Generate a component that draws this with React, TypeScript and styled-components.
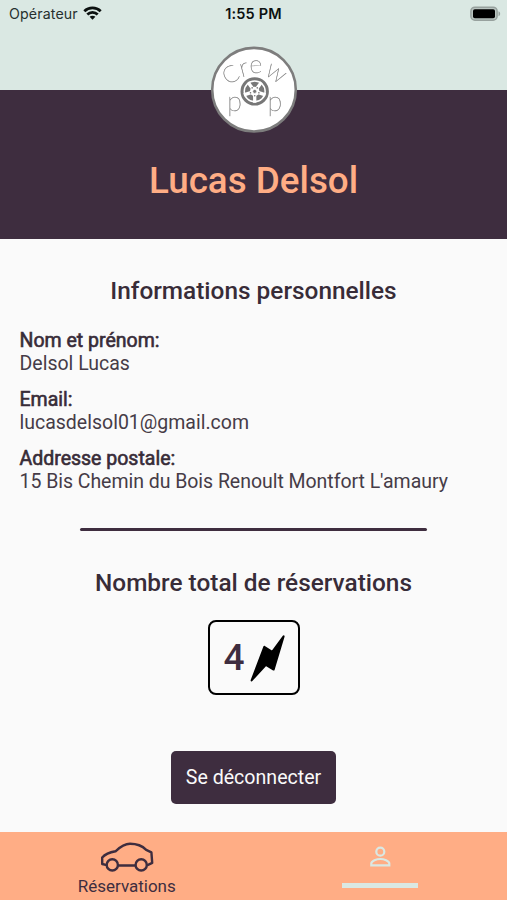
import React from "react";
import styled, { createGlobalStyle } from "styled-components";

const plum = "#3e2d3f";
const peach = "#ffad85";
const mint = "#dae8e3";

const GlobalStyle = createGlobalStyle`
  *, *::before, *::after { box-sizing: border-box; }
  body { margin: 0; background: #fafafa; }
  h1, h2, dl, dt, dd { margin: 0; font-weight: inherit; }
`;

const Screen = styled.div`
  width: 507px;
  height: 900px;
  display: flex;
  flex-direction: column;
  overflow: hidden;
  background: #fafafa;
  color: ${plum};
  font-family: Roboto, "Liberation Sans", sans-serif;
`;

const TopArea = styled.header`
  height: 90px;
  flex: none;
  background: ${mint};
`;

const StatusBar = styled.div`
  height: 27px;
  display: grid;
  grid-template-columns: 1fr auto 1fr;
  align-items: center;
  padding: 0 6px;
  font-family: Inter, "Liberation Sans", sans-serif;
  color: #0c1110;
`;

const Carrier = styled.div`
  display: flex;
  align-items: center;
  gap: 5px;
  padding-left: 3px;
  font-size: 14.2px;
  letter-spacing: 0.13px;
  color: #26302e;
`;

const Clock = styled.div`
  font-size: 14.5px;
  font-weight: 600;
  letter-spacing: 0.15px;
`;

const Battery = styled.svg`
  justify-self: end;
  display: block;
`;

const Banner = styled.section`
  position: relative;
  height: 149px;
  flex: none;
  display: flex;
  justify-content: center;
  background: ${plum};
`;

const LogoBadge = styled.svg`
  position: absolute;
  top: -44px;
  left: 210px;
  will-change: transform;
`;

const LogoLetter = styled.text`
  font-family: Lato, sans-serif;
  font-weight: 100;
  fill: #8c8c8c;
  stroke: #8c8c8c;
  stroke-width: 0.4px;
  text-anchor: middle;
`;

const UserName = styled.h1`
  padding-top: 69px;
  font-size: 36.8px;
  line-height: 44px;
  font-weight: 500;
  color: ${peach};
`;

const Content = styled.main`
  flex: 1;
  display: flex;
  flex-direction: column;
  align-items: center;
`;

const SectionTitle = styled.h2<{ $top: number }>`
  margin-top: ${(p) => p.$top}px;
  font-size: 24.4px;
  line-height: 30px;
  font-weight: 500;
  color: #382c38;
`;

const Details = styled.dl`
  align-self: stretch;
  margin-top: 23px;
  padding-left: 19.5px;
  display: flex;
  flex-direction: column;
  gap: 13px;
  font-size: 19.5px;
  line-height: 23px;
`;

const Label = styled.dt`
  color: #382c38;
  -webkit-text-stroke: 0.6px #382c38;
`;

const Value = styled.dd<{ $tight?: boolean }>`
  color: #463c47;
  letter-spacing: ${(p) => (p.$tight ? "-0.04px" : "0")};
`;

const Divider = styled.div`
  width: 347px;
  height: 3px;
  margin-top: 35px;
  border-radius: 2px;
  background: ${plum};
`;

const Counter = styled.div`
  width: 92px;
  height: 75px;
  margin-top: 22px;
  display: flex;
  align-items: center;
  padding-left: 14px;
  gap: 5px;
  border: 2.7px solid #000;
  border-radius: 8px;
  font-size: 37px;
  line-height: 44px;
  font-weight: 500;
`;

const LogoutButton = styled.button`
  width: 165px;
  height: 53px;
  margin-top: 56px;
  padding: 1px 0 0;
  border: 0;
  border-radius: 5px;
  background: ${plum};
  color: #fafafa;
  font: 400 19.6px/24px Roboto, sans-serif;
`;

const TabBar = styled.nav`
  height: 68px;
  flex: none;
  display: grid;
  grid-template-columns: 1fr 1fr;
  background: ${peach};
`;

const Tab = styled.div`
  display: flex;
  flex-direction: column;
  align-items: center;
  font-size: 17px;
  line-height: 20px;
`;

const CarSlot = styled.div`
  height: 44px;
  padding-top: 10px;
`;

const PersonSlot = styled.div`
  height: 37px;
  padding-top: 14px;
`;

const ActiveMark = styled.div`
  width: 76px;
  height: 5px;
  background: ${mint};
  margin-top: 14px;
`;

const WifiIcon = () => (
  <svg width="19" height="15" viewBox="0 0 19 15" fill="none" stroke="#0c1110" strokeWidth="2.7">
    <path d="M1.3 5.2C5.8 .7 13.2 .7 17.7 5.2" />
    <path d="M4.3 8.5C7.2 5.6 11.8 5.6 14.7 8.5" />
    <path d="M9.5 13.7 6.6 10.8c1.6-1.5 4.2-1.5 5.8 0Z" fill="#0c1110" stroke="none" />
  </svg>
);

const BatteryIcon = () => (
  <Battery width="31" height="16" viewBox="0 0 31 16">
    <rect x="0.9" y="1.2" width="26.2" height="13" rx="4" fill="#b9c4c0" stroke="#97a19e" strokeWidth="1.5" />
    <rect x="3" y="3.2" width="22" height="9" rx="1.8" fill="#000" />
    <path d="M28.5 5.2c2.2.7 2.2 4.3 0 5Z" fill="#97a19e" />
  </Battery>
);

const spokeAngles = [36, 108, 180, 252, 324];

const Logo = () => (
  <LogoBadge width="88" height="88" viewBox="0 0 88 88" role="img" aria-label="Crew Pop">
    <circle cx="44" cy="43.7" r="41.8" fill="#fff" stroke="#7d7d7d" strokeWidth="2.6" />
    <LogoLetter fontSize="23" transform="translate(24.3 35.5) rotate(-29)">C</LogoLetter>
    <LogoLetter fontSize="26" transform="translate(35.8 30) rotate(-15)">r</LogoLetter>
    <LogoLetter fontSize="25" transform="translate(46.2 26.8) rotate(-3)">e</LogoLetter>
    <LogoLetter fontSize="26" transform="translate(62 33.5) rotate(32)">w</LogoLetter>
    <LogoLetter fontSize="27" transform="translate(24.5 64.8)">p</LogoLetter>
    <LogoLetter fontSize="27" transform="translate(64.8 64.8)">p</LogoLetter>
    <circle cx="44.7" cy="45.4" r="12.7" fill="#fff" stroke="#777" strokeWidth="3" />
    <circle cx="44.7" cy="45.4" r="7.2" fill="none" stroke="#777" strokeWidth="5" />
    {spokeAngles.map((angle) => (
      <g key={angle} transform={`rotate(${angle} 44.7 45.4)`}>
        <path d="M44.7 43V34" stroke="#fff" strokeWidth="3.3" />
        <circle cx="44.7" cy="41" r="0.8" fill="#777" />
      </g>
    ))}
    <circle cx="44.7" cy="45.4" r="2" fill="#777" stroke="#fff" strokeWidth="0.7" />
  </LogoBadge>
);

const BoltIcon = () => (
  <svg width="36" height="48" viewBox="0 0 36 48">
    <path
      d="M33.6 2.4 23.6 35.6 15.9 30.8 1.6 46.4 14.3 12.8 22.2 17.8Z"
      fill="#000"
      stroke="#000"
      strokeWidth="2"
      strokeLinejoin="round"
    />
  </svg>
);

const CarIcon = () => (
  <svg width="54" height="31" viewBox="0 0 54 31" fill="none" stroke={plum} strokeWidth="2.4" strokeLinejoin="round">
    <path d="M6.8 23.2 2.2 22V15.5C5.5 11.8 10 10.3 15.5 9.3C21.5 3.7 25 1.8 30 1.8C37 1.8 42 3.6 46.2 7.8L51.4 10.3 52.2 20.8 47 23.3M18 23.5H35.5" />
    <circle cx="12.3" cy="22.9" r="5.6" />
    <circle cx="41.2" cy="22.9" r="5.6" />
  </svg>
);

const PersonIcon = () => (
  <svg width="22" height="22" viewBox="0 0 22 22" fill="none" stroke={mint} strokeWidth="2.2">
    <circle cx="11.3" cy="5.7" r="4" />
    <path d="M2.3 19.4V17.6C2.3 14.8 7.8 13 11.3 13S20.3 14.8 20.3 17.6V19.4Z" />
  </svg>
);

const personalDetails = [
  { label: "Nom et prénom:", value: "Delsol Lucas" },
  { label: "Email:", value: "lucasdelsol01@gmail.com" },
  { label: "Addresse postale:", value: "15 Bis Chemin du Bois Renoult Montfort L'amaury", tight: true },
];

export default function App() {
  return (
    <>
      <GlobalStyle />
      <Screen>
        <TopArea>
          <StatusBar>
            <Carrier>
              Opérateur
              <WifiIcon />
            </Carrier>
            <Clock>1:55 PM</Clock>
            <BatteryIcon />
          </StatusBar>
        </TopArea>
        <Banner>
          <Logo />
          <UserName>Lucas Delsol</UserName>
        </Banner>
        <Content>
          <SectionTitle $top={37}>Informations personnelles</SectionTitle>
          <Details>
            {personalDetails.map(({ label, value, tight }) => (
              <div key={label}>
                <Label>{label}</Label>
                <Value $tight={tight}>{value}</Value>
              </div>
            ))}
          </Details>
          <Divider />
          <SectionTitle $top={37}>Nombre total de réservations</SectionTitle>
          <Counter>
            4
            <BoltIcon />
          </Counter>
          <LogoutButton type="button">Se déconnecter</LogoutButton>
        </Content>
        <TabBar>
          <Tab>
            <CarSlot>
              <CarIcon />
            </CarSlot>
            Réservations
          </Tab>
          <Tab>
            <PersonSlot>
              <PersonIcon />
            </PersonSlot>
            <ActiveMark />
          </Tab>
        </TabBar>
      </Screen>
    </>
  );
}
